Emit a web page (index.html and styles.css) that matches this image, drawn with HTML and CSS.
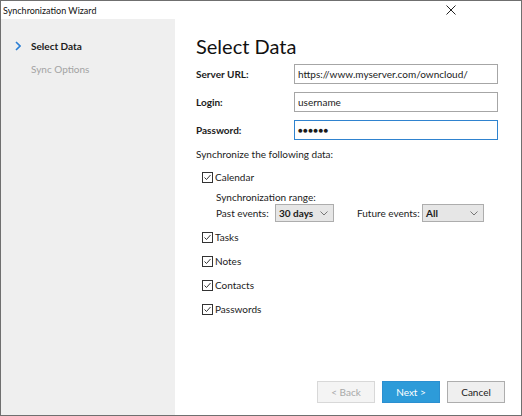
FILE: index.html
```html
<html>
<head>
  <link rel="stylesheet" href="styles.css">
</head>
<body>
  <div class="window">
    <div class="titlebar">
      <span class="title">Synchronization Wizard</span>
      <svg class="close" width="10" height="10" viewBox="0 0 10 10">
        <path d="M0.5 0.5 L9.5 9.5 M9.5 0.5 L0.5 9.5" stroke="#222" stroke-width="1" fill="none" />
      </svg>
    </div>
    <div class="main">
      <div class="sidebar">
        <div class="step step-active">
          <svg class="chevron" width="6" height="10" viewBox="0 0 6 10">
            <path d="M1 1 L5 5 L1 9" stroke="#2b7fd4" stroke-width="1.6" fill="none" />
          </svg>
          <span>Select Data</span>
        </div>
        <div class="step">
          <span>Sync Options</span>
        </div>
      </div>
      <div class="content">
        <div class="heading">Select Data</div>
        <div class="field-row">
          <label class="field-label">Server URL:</label>
          <div class="field-input">https://www.myserver.com/owncloud/</div>
        </div>
        <div class="field-row">
          <label class="field-label">Login:</label>
          <div class="field-input">username</div>
        </div>
        <div class="field-row">
          <label class="field-label">Password:</label>
          <div class="field-input field-focus"><span class="dots">&#9679;&#9679;&#9679;&#9679;&#9679;&#9679;</span></div>
        </div>
        <div class="section-text">Synchronize the following data:</div>
        <div class="check-row check-first">
          <span class="checkbox">
            <svg width="11" height="11" viewBox="0 0 11 11">
              <path d="M2.5 5.5 L4.5 7.5 L8.5 3" stroke="#333" stroke-width="1" fill="none" />
            </svg>
          </span>
          <span>Calendar</span>
        </div>
        <div class="range-title">Synchronization range:</div>
        <div class="range-row">
          <span class="range-label range-past">Past events:</span>
          <div class="dropdown dropdown-past">
            <span>30 days</span>
            <svg width="8" height="5" viewBox="0 0 8 5"><path d="M0.5 0.5 L4 4 L7.5 0.5" stroke="#777" fill="none" /></svg>
          </div>
          <span class="range-label range-future">Future events:</span>
          <div class="dropdown dropdown-future">
            <span>All</span>
            <svg width="8" height="5" viewBox="0 0 8 5"><path d="M0.5 0.5 L4 4 L7.5 0.5" stroke="#777" fill="none" /></svg>
          </div>
        </div>
        <div class="check-row check-tasks">
          <span class="checkbox">
            <svg width="11" height="11" viewBox="0 0 11 11">
              <path d="M2.5 5.5 L4.5 7.5 L8.5 3" stroke="#333" stroke-width="1" fill="none" />
            </svg>
          </span>
          <span>Tasks</span>
        </div>
        <div class="check-row">
          <span class="checkbox">
            <svg width="11" height="11" viewBox="0 0 11 11">
              <path d="M2.5 5.5 L4.5 7.5 L8.5 3" stroke="#333" stroke-width="1" fill="none" />
            </svg>
          </span>
          <span>Notes</span>
        </div>
        <div class="check-row">
          <span class="checkbox">
            <svg width="11" height="11" viewBox="0 0 11 11">
              <path d="M2.5 5.5 L4.5 7.5 L8.5 3" stroke="#333" stroke-width="1" fill="none" />
            </svg>
          </span>
          <span>Contacts</span>
        </div>
        <div class="check-row">
          <span class="checkbox">
            <svg width="11" height="11" viewBox="0 0 11 11">
              <path d="M2.5 5.5 L4.5 7.5 L8.5 3" stroke="#333" stroke-width="1" fill="none" />
            </svg>
          </span>
          <span>Passwords</span>
        </div>
        <div class="buttons">
          <div class="button button-disabled">&lt; Back</div>
          <div class="button button-primary">Next &gt;</div>
          <div class="button">Cancel</div>
        </div>
      </div>
    </div>
  </div>
</body>
</html>
```

FILE: styles.css
```css
* {
  box-sizing: border-box;
  margin: 0;
  padding: 0;
}

body {
  width: 522px;
  height: 416px;
  overflow: hidden;
  background-color: #5a5a5a;
  font-family: Lato, "Open Sans", sans-serif;
  font-size: 10px;
  color: #1b1b1b;
}

.window {
  display: flex;
  flex-direction: column;
  width: 522px;
  height: 416px;
  border: 1px solid #6f6f6f;
  background-color: #ffffff;
}

.titlebar {
  display: flex;
  align-items: center;
  justify-content: space-between;
  height: 18px;
  padding: 0 65px 0 2px;
}

.title {
  font-size: 9px;
  color: #111;
}

.close {
  display: block;
}

.main {
  display: flex;
  flex: 1;
}

.sidebar {
  width: 174px;
  background-color: #efefef;
  padding-top: 19px;
}

.step {
  display: flex;
  align-items: center;
  height: 16px;
  margin-bottom: 7px;
  padding-left: 30px;
  color: #a3a3a3;
  white-space: nowrap;
}

.step-active {
  padding-left: 14px;
  color: #1b1b1b;
  font-weight: 700;
}

.chevron {
  margin-right: 10px;
}

.content {
  display: flex;
  flex-direction: column;
  flex: 1;
  padding: 13px 16px 12px 21px;
  white-space: nowrap;
}

.heading {
  font-size: 20px;
  line-height: 28px;
  color: #111;
  margin-bottom: 4px;
}

.field-row {
  display: flex;
  align-items: center;
  height: 20px;
  margin-bottom: 8px;
}

.field-label {
  width: 98px;
  font-weight: 700;
}

.field-input {
  width: 204px;
  height: 20px;
  border: 1px solid #a6a6a6;
  padding: 0 3px;
  line-height: 18px;
  overflow: hidden;
}

.field-focus {
  border-color: #2f83cf;
}

.dots {
  font-size: 8px;
  letter-spacing: 0.3px;
}

.section-text {
  line-height: 16px;
  margin-top: -2px;
}

.check-row {
  display: flex;
  align-items: center;
  height: 16px;
  margin-top: 8px;
  padding-left: 6px;
}

.check-first {
  margin-top: 7px;
}

.check-tasks {
  margin-top: 7px;
}

.checkbox {
  display: block;
  width: 11px;
  height: 11px;
  border: 1px solid #333;
  margin-right: 2px;
  position: relative;
}

.checkbox svg {
  position: absolute;
  left: -1px;
  top: -1px;
}

.range-title {
  padding-left: 20px;
  line-height: 14px;
  margin-top: 5px;
}

.range-row {
  display: flex;
  align-items: center;
  height: 18px;
  padding-left: 20px;
}

.range-past {
  width: 59px;
}

.range-future {
  width: 65px;
  margin-left: 23px;
}

.dropdown {
  display: flex;
  align-items: center;
  justify-content: space-between;
  height: 18px;
  border: 1px solid #adadad;
  background-color: #e6e6e6;
  padding: 0 5px 0 3px;
  font-weight: 700;
}

.dropdown-past {
  width: 59px;
}

.dropdown-future {
  width: 62px;
}

.buttons {
  display: flex;
  justify-content: flex-end;
  margin-top: auto;
  gap: 7px;
}

.button {
  width: 58px;
  height: 22px;
  border: 1px solid #adadad;
  background-color: #efefef;
  text-align: center;
  line-height: 20px;
}

.button-disabled {
  border-color: #d8d8d8;
  background-color: #f4f4f4;
  color: #a8a8a8;
}

.button-primary {
  border-color: #2b8fd0;
  background-color: #2d9bd9;
  color: #ffffff;
}
```
